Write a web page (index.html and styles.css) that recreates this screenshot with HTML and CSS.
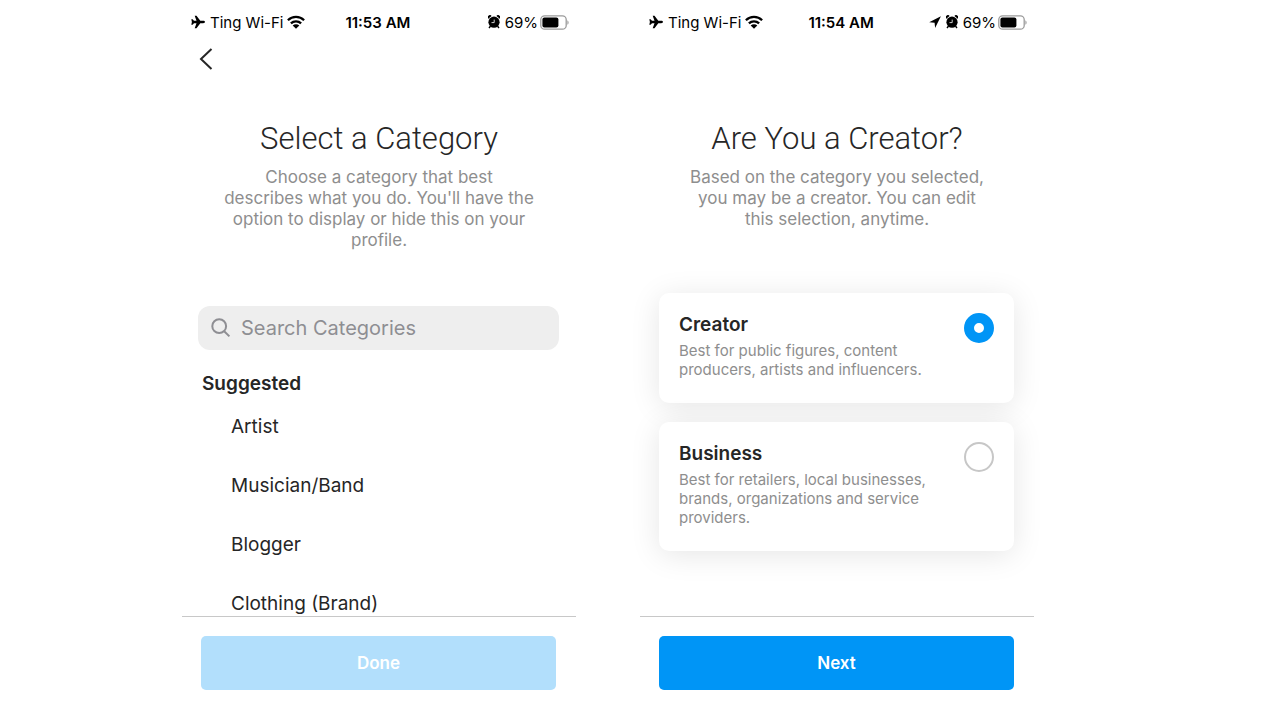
FILE: index.html
```
<!DOCTYPE html>
<html lang="en">
<head>
<meta charset="utf-8">
<meta name="viewport" content="width=device-width, initial-scale=1">
<title>Account setup</title>
<link rel="stylesheet" href="styles.css">
</head>
<body>
<svg class="sprite" aria-hidden="true">
  <symbol id="plane" viewBox="0 0 14 14"><path d="M14 7c0-.7-.8-1.200-1.800-1.200H9.300L5.500.8H3.700L5.500 5.800H3L1.600 4.200H.3L.9 7 .3 9.800h1.300L3 8.200h2.500l-1.800 5h1.800l3.800-5h2.900c1 0 1.800-.5 1.800-1.200z"/></symbol>
  <symbol id="wifi" viewBox="0 0 18 14"><g fill="none" stroke="currentColor" stroke-width="2.300"><path d="M.9 5.200a11.600 11.600 0 0 1 16.200 0"/><path d="M3.900 8.400a7.300 7.300 0 0 1 10.200 0"/></g><path d="M9 13.800 5.700 10.600a4.700 4.700 0 0 1 6.600 0z"/></symbol>
  <symbol id="alarm" viewBox="0 0 12 14"><circle cx="6" cy="7.200" r="5.600"/><path d="M.2 3.800A2.100 2.100 0 0 1 3.600.9zM11.800 3.800A2.100 2.100 0 0 0 8.400.9z"/><path d="M2.400 11.200 1 13M9.600 11.200 11 13" stroke="currentColor" stroke-width="1.400"/><path d="M6.200 4.600v3H3.500" fill="none" stroke="#fff" stroke-width=".8"/></symbol>
  <symbol id="location" viewBox="0 0 12 12"><path d="M11.900.3.200 6.200l5.400.5.500 5.200z"/></symbol>
  <symbol id="battery" viewBox="0 0 29 15"><rect x=".8" y=".8" width="25.400" height="13.400" rx="3.800" fill="none" stroke="#9b9b9b" stroke-width="1.300"/><rect x="2.400" y="2.500" width="16" height="10" rx="2"/><path d="M27.400 5.200c1.600.9 1.600 3.700 0 4.600z" fill="#9b9b9b"/></symbol>
</svg>
<main class="screens">
  <section class="screen">
    <div class="status">
      <svg class="icon-plane"><use href="#plane"/></svg>
      <span class="network">Ting Wi-Fi</span>
      <svg class="icon-wifi"><use href="#wifi"/></svg>
      <time class="clock">11:53 AM</time>
      <div class="status-end">
        <svg class="icon-alarm"><use href="#alarm"/></svg>
        <span class="percent">69%</span>
        <svg class="icon-battery"><use href="#battery"/></svg>
      </div>
    </div>
    <nav class="navbar">
      <button class="back" type="button" aria-label="Back"><svg viewBox="0 0 14 22"><path d="M12.500 1 2 11l10.500 10"/></svg></button>
    </nav>
    <header class="intro">
      <h1 class="title">Select a Category</h1>
      <p class="lead">Choose a category that best<br>describes what you do. You'll have the<br>option to display or hide this on your<br>profile.</p>
    </header>
    <label class="search">
      <svg class="icon-search" viewBox="0 0 20 20"><circle cx="8.200" cy="8.200" r="6.900"/><path d="m13.200 13.200 5.200 5.200"/></svg>
      <input class="search-input" type="search" placeholder="Search Categories" aria-label="Search Categories">
    </label>
    <div class="categories">
      <h2 class="section-title">Suggested</h2>
      <ul class="list">
        <li class="item">Artist</li>
        <li class="item">Musician/Band</li>
        <li class="item">Blogger</li>
        <li class="item">Clothing (Brand)</li>
      </ul>
    </div>
    <footer class="actions"><button class="button" type="button" disabled>Done</button></footer>
  </section>

  <section class="screen">
    <div class="status status-located">
      <svg class="icon-plane"><use href="#plane"/></svg>
      <span class="network">Ting Wi-Fi</span>
      <svg class="icon-wifi"><use href="#wifi"/></svg>
      <time class="clock">11:54 AM</time>
      <div class="status-end">
        <svg class="icon-location"><use href="#location"/></svg>
        <svg class="icon-alarm"><use href="#alarm"/></svg>
        <span class="percent">69%</span>
        <svg class="icon-battery"><use href="#battery"/></svg>
      </div>
    </div>
    <div class="navbar"></div>
    <header class="intro">
      <h1 class="title">Are You a Creator?</h1>
      <p class="lead">Based on the category you selected,<br>you may be a creator. You can edit<br>this selection, anytime.</p>
    </header>
    <div class="options">
      <label class="card">
        <span class="card-text">
          <span class="card-title">Creator</span>
          <span class="card-note">Best for public figures, content<br>producers, artists and influencers.</span>
        </span>
        <input class="radio" type="radio" name="account" checked>
      </label>
      <label class="card">
        <span class="card-text">
          <span class="card-title">Business</span>
          <span class="card-note">Best for retailers, local businesses,<br>brands, organizations and service<br>providers.</span>
        </span>
        <input class="radio" type="radio" name="account">
      </label>
    </div>
    <footer class="actions"><button class="button" type="button">Next</button></footer>
  </section>
</main>
</body>
</html>
```
FILE: styles.css
```
* { box-sizing: border-box; }
body {
  margin: 0;
  background: #fff;
  color: #262626;
  font-family: Inter, "Liberation Sans", sans-serif;
}
h1, h2, p, ul { margin: 0; padding: 0; }
button, input { font: inherit; }
svg { flex: none; fill: currentColor; }
.sprite { display: none; }

.screens {
  display: grid;
  grid-template-columns: 1fr 1fr;
  gap: 64px;
  height: 100vh;
  padding: 0 246px 0 182px;
}
.screen {
  display: flex;
  flex-direction: column;
  min-width: 0;
  min-height: 0;
}

.status {
  display: flex;
  align-items: center;
  height: 44px;
  padding: 0 7px 0 9px;
  color: #000;
  font-size: 15px;
  white-space: nowrap;
}
.network { margin: 0 4px 0 5px; }
.clock { margin-left: 40px; font-weight: 600; }
.status-located .clock { margin-left: 45px; }
.status-end { display: flex; align-items: center; margin-left: auto; }
.icon-plane { width: 14px; height: 14px; }
.icon-wifi { width: 18px; height: 14px; }
.icon-location { width: 12px; height: 12px; margin-right: 5px; }
.icon-alarm { width: 12px; height: 14px; }
.percent { margin: 0 2px 0 5px; }
.icon-battery { width: 29px; height: 15px; }

.navbar { height: 32px; padding: 4px 0 0 17px; }
.back {
  display: flex;
  padding: 0;
  border: 0;
  background: none;
  color: #262626;
}
.back svg { width: 14px; height: 22px; fill: none; stroke: currentColor; stroke-width: 2; }

.intro { padding-top: 43px; text-align: center; }
.title {
  font-family: Roboto, Inter, sans-serif;
  font-size: 31px;
  font-weight: 300;
  line-height: 40px;
  white-space: nowrap;
}
.lead { margin-top: 8px; color: #8e8e8e; font-size: 17px; line-height: 21px; white-space: nowrap; }

.search {
  display: flex;
  align-items: center;
  gap: 10px;
  height: 44px;
  margin: 55px 17px 0 16px;
  padding: 0 13px;
  border-radius: 12px;
  background: #eee;
  color: #8e8e93;
}
.icon-search { width: 20px; height: 20px; fill: none; stroke: currentColor; stroke-width: 2; }
.search-input {
  flex: 1;
  min-width: 0;
  padding: 0;
  border: 0;
  outline: 0;
  background: none;
  font-size: 20px;
}
.search-input::placeholder { color: #8e8e93; opacity: 1; }

.categories { flex: 1; min-height: 0; overflow: hidden; padding: 22px 20px 0; }
.section-title { font-size: 19px; font-weight: 600; line-height: 24px; }
.list { padding: 1px 0 0 29px; list-style: none; }
.item { font-size: 19px; line-height: 59px; }

.options {
  flex: 1;
  display: flex;
  flex-direction: column;
  gap: 19px;
  padding: 63px 20px 0 19px;
}
.card {
  display: flex;
  justify-content: space-between;
  padding: 20px 20px 24px;
  border-radius: 10px;
  background: #fff;
  box-shadow: 0 4px 30px rgba(0, 0, 0, 0.1);
}
.card-text { display: flex; flex-direction: column; gap: 4px; white-space: nowrap; }
.card-title { font-size: 19px; font-weight: 600; line-height: 24px; }
.card-note { color: #8e8e8e; font-size: 15px; line-height: 19px; }
.radio {
  appearance: none;
  flex: none;
  width: 30px;
  height: 30px;
  margin: 0;
  border: 2px solid #c7c7c7;
  border-radius: 50%;
  background: #fff;
}
.radio:checked { border: 10px solid #0095f6; }

.actions { padding: 19px 20px 30px 19px; border-top: 1px solid #c8c8c8; }
.button {
  display: block;
  width: 100%;
  height: 54px;
  border: 0;
  border-radius: 5px;
  background: #0095f6;
  color: #fff;
  font-size: 17px;
  font-weight: 600;
}
.button:disabled { background: #b2dffc; }
```
